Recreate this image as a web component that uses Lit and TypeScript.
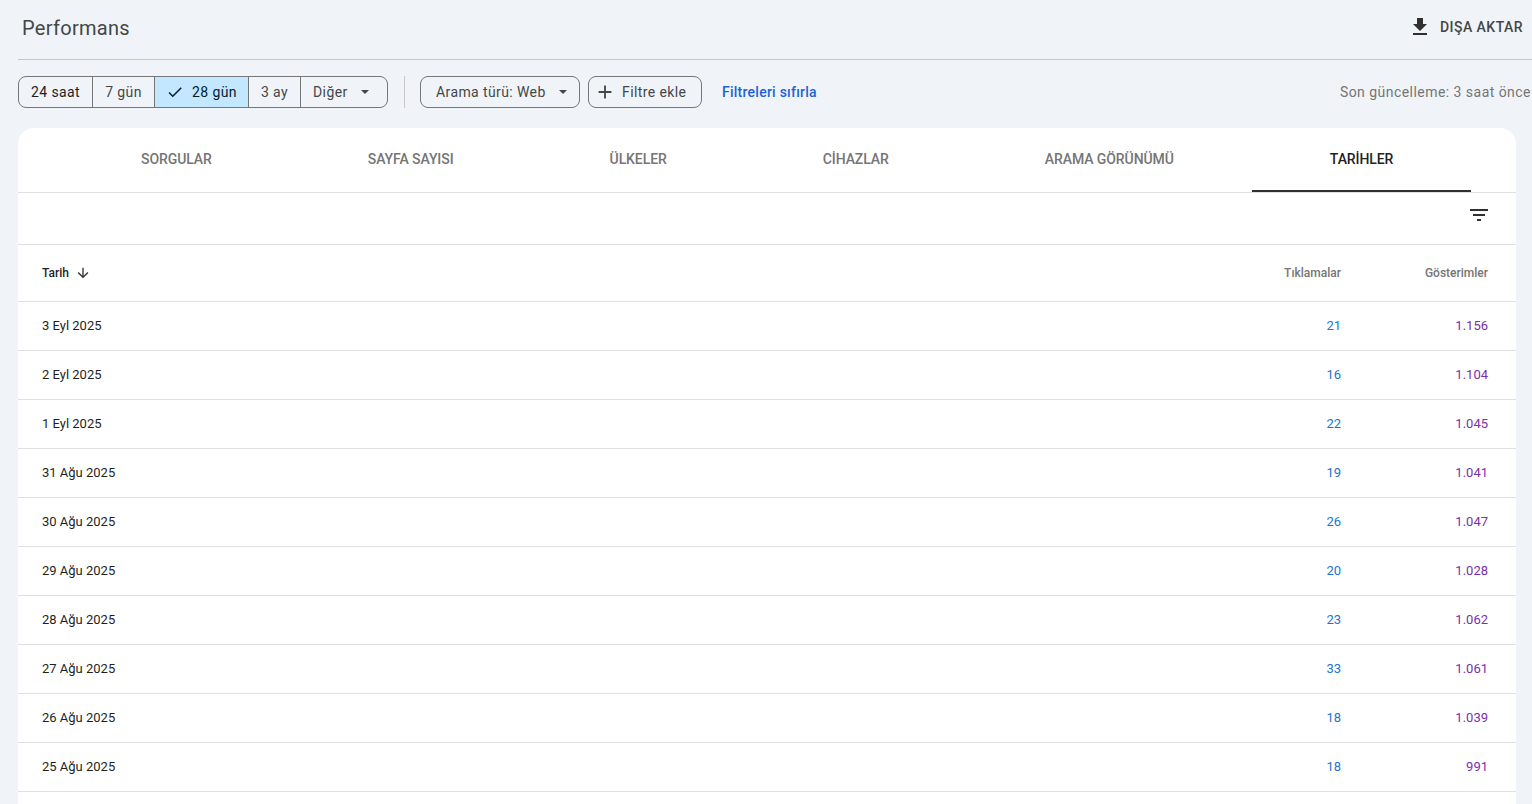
import { LitElement, html, css } from 'lit';
import { customElement } from 'lit/decorators.js';

const rows = [
  ['3 Eyl 2025', '21', '1.156'],
  ['2 Eyl 2025', '16', '1.104'],
  ['1 Eyl 2025', '22', '1.045'],
  ['31 Ağu 2025', '19', '1.041'],
  ['30 Ağu 2025', '26', '1.047'],
  ['29 Ağu 2025', '20', '1.028'],
  ['28 Ağu 2025', '23', '1.062'],
  ['27 Ağu 2025', '33', '1.061'],
  ['26 Ağu 2025', '18', '1.039'],
  ['25 Ağu 2025', '18', '991'],
];

const tabs = ['SORGULAR', 'SAYFA SAYISI', 'ÜLKELER', 'CİHAZLAR', 'ARAMA GÖRÜNÜMÜ', 'TARİHLER'];

@customElement('app-root')
export class AppRoot extends LitElement {
  static styles = css`
    :host {
      display: flex;
      flex-direction: column;
      height: 100vh;
      overflow: hidden;
      background: #f0f4f9;
      font-family: Roboto, "Liberation Sans", sans-serif;
      color: #1f1f1f;
    }
    .header {
      flex: none;
      height: 59px;
      margin-left: 18px;
      padding: 0 9px 0 4px;
      border-bottom: 1px solid #c7c7c7;
      display: flex;
      align-items: center;
      justify-content: space-between;
    }
    .title {
      font-size: 20px;
      letter-spacing: 0.3px;
      color: #444746;
      line-height: 56px;
      margin-top: -4px;
    }
    .export {
      display: flex;
      align-items: center;
      gap: 8px;
      font-size: 14px;
      font-weight: 500;
      letter-spacing: 0.45px;
      color: #444746;
      margin-top: -5px;
    }
    .export svg { width: 24px; height: 24px; fill: #303030; margin-top: -1px; }
    .toolbar {
      flex: none;
      height: 32px;
      margin: 16px 1px 20px 18px;
      display: flex;
      align-items: center;
      font-size: 14px;
      letter-spacing: 0.4px;
      color: #444746;
    }
    .segments {
      display: flex;
      height: 32px;
      box-sizing: border-box;
      border: 1px solid #747775;
      border-radius: 8px;
      overflow: hidden;
    }
    .seg {
      display: flex;
      align-items: center;
      box-sizing: border-box;
      border-left: 1px solid #747775;
      justify-content: center;
    }
    .seg:first-child { border-left: 0; color: #1f1f1f; }
    .seg.on { background: #c2e7ff; color: #001d35; }
    .seg.on svg { width: 18px; height: 18px; margin-right: 8px; fill: #001d35; }
    .seg.more { justify-content: flex-start; padding-left: 12px; gap: 13px; }
    .caret {
      width: 0;
      height: 0;
      border-left: 4px solid transparent;
      border-right: 4px solid transparent;
      border-top: 4px solid #444746;
    }
    .divider {
      width: 1px;
      height: 32px;
      background: #c7c7c7;
      margin: 0 15px 0 16px;
    }
    .chip {
      height: 32px;
      box-sizing: border-box;
      border: 1px solid #747775;
      border-radius: 8px;
      display: flex;
      align-items: center;
    }
    .type { width: 160px; padding-left: 15px; margin-right: 8px; }
    .type .caret { margin-left: 13px; }
    .add { width: 114px; padding-left: 5px; }
    .add svg { width: 22px; height: 22px; fill: #444746; margin-right: 6px; }
    .reset { margin-left: 20px; color: #1a63d8; font-weight: 500; letter-spacing: 0.25px; }
    .updated { margin-left: auto; color: #757575; letter-spacing: 0.46px; white-space: nowrap; }
    .card {
      flex: 1;
      margin: 0 16px 0 18px;
      background: #fff;
      border-radius: 16px 16px 0 0;
    }
    .tabs {
      height: 65px;
      box-sizing: border-box;
      padding-left: 45px;
      display: flex;
      border-bottom: 1px solid #e0e0e0;
    }
    .tab {
      height: 64px;
      box-sizing: border-box;
      padding: 0 78px;
      line-height: 63px;
      font-size: 14px;
      font-weight: 500;
      letter-spacing: -0.08px;
      color: #757575;
      white-space: nowrap;
    }
    .tab.active {
      color: #1f1f1f;
      border-bottom: 2px solid #303030;
    }
    .actions {
      height: 52px;
      box-sizing: border-box;
      border-bottom: 1px solid #e0e0e0;
      padding: 10px 25px 0 0;
      display: flex;
      justify-content: flex-end;
    }
    .actions svg { width: 24px; height: 24px; fill: #303030; }
    .row {
      display: grid;
      grid-template-columns: 1fr 147px 147px;
      height: 49px;
      box-sizing: border-box;
      padding: 0 28px 2px 24px;
      align-items: center;
      border-bottom: 1px solid #e0e0e0;
      font-size: 13px;
      color: #1f1f1f;
    }
    .head {
      height: 57px;
      padding-bottom: 0;
      font-size: 12px;
      font-weight: 500;
      color: #757575;
    }
    .sort {
      display: flex;
      align-items: center;
      gap: 6px;
      color: #1f1f1f;
    }
    .sort svg { width: 16px; height: 16px; fill: #303030; }
    .num { text-align: right; }
    .clicks { color: #1976d2; }
    .imps { color: #7b2fa8; }
  `;

  render() {
    return html`
      <div class="header">
        <span class="title">Performans</span>
        <span class="export">
          <svg viewBox="0 0 24 24"><path d="M19 9h-4V3H9v6H5l7 7 7-7zM5 18v2h14v-2H5z"></path></svg>
          DIŞA AKTAR
        </span>
      </div>
      <div class="toolbar">
        <div class="segments">
          <div class="seg" style="width:73px">24 saat</div>
          <div class="seg" style="width:62px">7 gün</div>
          <div class="seg on" style="width:94px">
            <svg viewBox="0 0 24 24"><path d="M9 16.2 4.8 12l-1.4 1.4L9 19 21 7l-1.4-1.4z"></path></svg>
            28 gün
          </div>
          <div class="seg" style="width:52px">3 ay</div>
          <div class="seg more" style="width:87px">Diğer <span class="caret"></span></div>
        </div>
        <div class="divider"></div>
        <div class="chip type">Arama türü: Web <span class="caret"></span></div>
        <div class="chip add">
          <svg viewBox="0 0 24 24"><path d="M19 13h-6v6h-2v-6H5v-2h6V5h2v6h6z"></path></svg>
          Filtre ekle
        </div>
        <span class="reset">Filtreleri sıfırla</span>
        <span class="updated">Son güncelleme: 3 saat önce</span>
      </div>
      <div class="card">
        <div class="tabs">
          ${tabs.map((t) => html`<div class="tab ${t === 'TARİHLER' ? 'active' : ''}">${t}</div>`)}
        </div>
        <div class="actions">
          <svg viewBox="0 0 24 24"><path d="M10 18h4v-2h-4v2zM3 6v2h18V6H3zm3 7h12v-2H6v2z"></path></svg>
        </div>
        <div class="row head">
          <div class="sort">Tarih
            <svg viewBox="0 0 24 24"><path d="M20 12l-1.41-1.41L13 16.17V4h-2v12.17l-5.58-5.59L4 12l8 8 8-8z"></path></svg>
          </div>
          <div class="num">Tıklamalar</div>
          <div class="num">Gösterimler</div>
        </div>
        ${rows.map(
          (r) => html`
            <div class="row">
              <div>${r[0]}</div>
              <div class="num clicks">${r[1]}</div>
              <div class="num imps">${r[2]}</div>
            </div>
          `,
        )}
      </div>
    `;
  }
}
